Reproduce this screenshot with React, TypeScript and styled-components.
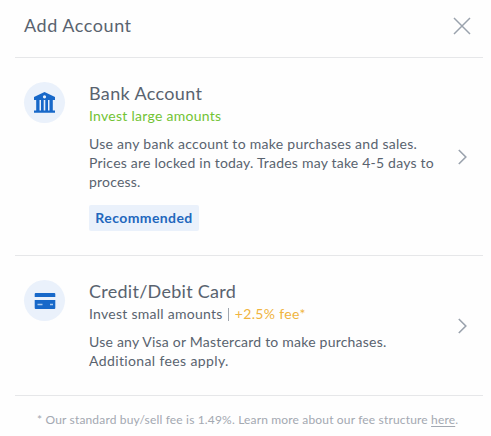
import React from "react";
import styled, { createGlobalStyle } from "styled-components";

const GlobalStyle = createGlobalStyle`
  * { box-sizing: border-box; }
  body {
    margin: 0;
    background: #fefefe;
    color: #59636f;
    font-family: "Lato", "Open Sans", sans-serif;
  }
`;

const Dialog = styled.main`
  height: 436px;
  padding: 0 8px 0 15px;
  overflow: hidden;
`;

const Header = styled.header`
  display: flex;
  align-items: flex-start;
  justify-content: space-between;
  height: 58px;
  padding: 13px 12px 0 9px;
  border-bottom: 1px solid #e6e7e9;
`;

const Title = styled.h1`
  margin: 0;
  font-size: 18px;
  font-weight: 400;
  line-height: 24px;
  letter-spacing: 0.55px;
`;

const IconButton = styled.button`
  display: flex;
  margin-top: 4px;
  padding: 0;
  border: 0;
  background: none;
  color: #9aa2ad;
`;

const Option = styled.section<{ $height: number }>`
  display: flex;
  height: ${(p) => p.$height}px;
  padding: 24px 15px 0 9px;
  border-bottom: 1px solid #e6e7e9;
`;

const IconCircle = styled.div`
  display: flex;
  flex: none;
  align-items: center;
  justify-content: center;
  width: 41px;
  height: 41px;
  border-radius: 50%;
  background: #eaf1fb;
  color: #1768c9;
`;

const Details = styled.div`
  flex: 1;
  margin-top: -1px;
  padding-left: 24px;
  white-space: nowrap;
`;

const Name = styled.h2<{ $spacing: number }>`
  margin: 0;
  font-size: 18px;
  font-weight: 400;
  line-height: 24px;
  letter-spacing: ${(p) => p.$spacing}px;
`;

const Summary = styled.div<{ $green?: boolean }>`
  display: flex;
  align-items: center;
  height: 20px;
  margin-top: 1px;
  font-size: 14px;
  line-height: 20px;
  letter-spacing: 0.27px;
  color: ${(p) => (p.$green ? "#72c334" : "inherit")};
`;

const Fee = styled.span`
  height: 20px;
  letter-spacing: 0.35px;
  color: #f0b440;
`;

const Separator = styled.span`
  width: 1px;
  height: 13px;
  margin: 0 6px 0 5px;
  background: #a0a7b0;
`;

const Description = styled.p`
  margin: 8px 0 0;
  font-size: 14px;
  line-height: 19px;
`;

const Line = styled.span<{ $spacing: number }>`
  display: block;
  letter-spacing: ${(p) => p.$spacing}px;
`;

const Badge = styled.span`
  display: flex;
  justify-content: center;
  width: 110px;
  height: 26px;
  margin-top: 14px;
  border-radius: 2px;
  background: #eaf1fb;
  color: #2267bd;
  font-size: 14px;
  font-weight: 700;
  line-height: 25px;
  letter-spacing: 0.4px;
`;

const Arrow = styled.div<{ $top: number }>`
  flex: none;
  height: 16px;
  margin-top: ${(p) => p.$top}px;
  color: #9aa2ad;
`;

const Footnote = styled.footer`
  padding: 15px 0 0 22px;
  font-size: 12px;
  line-height: 18px;
  letter-spacing: 0.165px;
  white-space: nowrap;
  color: #a3a8b1;
`;

const Link = styled.a`
  text-decoration: underline;
  text-underline-offset: 2px;
`;

const CloseIcon = () => (
  <svg width="18" height="18" viewBox="0 0 18 18" fill="none" stroke="currentColor" strokeWidth="1.5">
    <path d="M1 1l16 16M17 1L1 17" />
  </svg>
);

const ChevronIcon = () => (
  <svg width="10" height="16" viewBox="0 0 10 16" fill="none" stroke="currentColor" strokeWidth="1.6" display="block">
    <path d="M0.8 1l7 7-7 7" />
  </svg>
);

const BankIcon = () => (
  <svg width="23" height="21" viewBox="0 0 23 21" fill="currentColor">
    <path
      fillRule="evenodd"
      d="M11.500 0l10.500 5V8H1V5ZM11.500 3.200a1.600 1.600 0 1 0 0 3.200a1.600 1.600 0 1 0 0-3.200Z"
    />
    <path d="M3.200 8h3.300v10.500H3.200ZM8 8h2.700v10.500H8ZM12.300 8H15v10.500h-2.700ZM16.500 8h3.300v10.500h-3.300ZM1 18.500h21v2.300H1Z" />
  </svg>
);

const CardIcon = () => (
  <svg width="22" height="16" viewBox="0 0 22 16" fill="currentColor">
    <path d="M1.700 0h18.600a1 1 0 0 1 1 1v3H.7V1a1 1 0 0 1 1-1ZM.7 7h20.600v8a1 1 0 0 1-1 1H1.700a1 1 0 0 1-1-1Z" />
    <path d="M3.500 11.500h5M16 11.500h3" stroke="#a9c9f0" strokeWidth="1.500" />
  </svg>
);

export default function App() {
  return (
    <>
      <GlobalStyle />
      <Dialog>
        <Header>
          <Title>Add Account</Title>
          <IconButton aria-label="Close">
            <CloseIcon />
          </IconButton>
        </Header>
        <Option $height={198}>
          <IconCircle>
            <BankIcon />
          </IconCircle>
          <Details>
            <Name $spacing={0.35}>Bank Account</Name>
            <Summary $green>Invest large amounts</Summary>
            <Description>
              <Line $spacing={0.28}>Use any bank account to make purchases and sales.</Line>
              <Line $spacing={0.21}>Prices are locked in today. Trades may take 4-5 days to</Line>
              <Line $spacing={0.2}>process.</Line>
            </Description>
            <Badge>Recommended</Badge>
          </Details>
          <Arrow $top={67}>
            <ChevronIcon />
          </Arrow>
        </Option>
        <Option $height={140}>
          <IconCircle>
            <CardIcon />
          </IconCircle>
          <Details>
            <Name $spacing={0.28}>Credit/Debit Card</Name>
            <Summary>
              <span>Invest small amounts</span>
              <Separator />
              <Fee>+2.5% fee*</Fee>
            </Summary>
            <Description>
              <Line $spacing={0.22}>Use any Visa or Mastercard to make purchases.</Line>
              <Line $spacing={0.38}>Additional fees apply.</Line>
            </Description>
          </Details>
          <Arrow $top={38}>
            <ChevronIcon />
          </Arrow>
        </Option>
        <Footnote>
          * Our standard buy/sell fee is 1.49%. Learn more about our fee structure <Link>here</Link>.
        </Footnote>
      </Dialog>
    </>
  );
}
